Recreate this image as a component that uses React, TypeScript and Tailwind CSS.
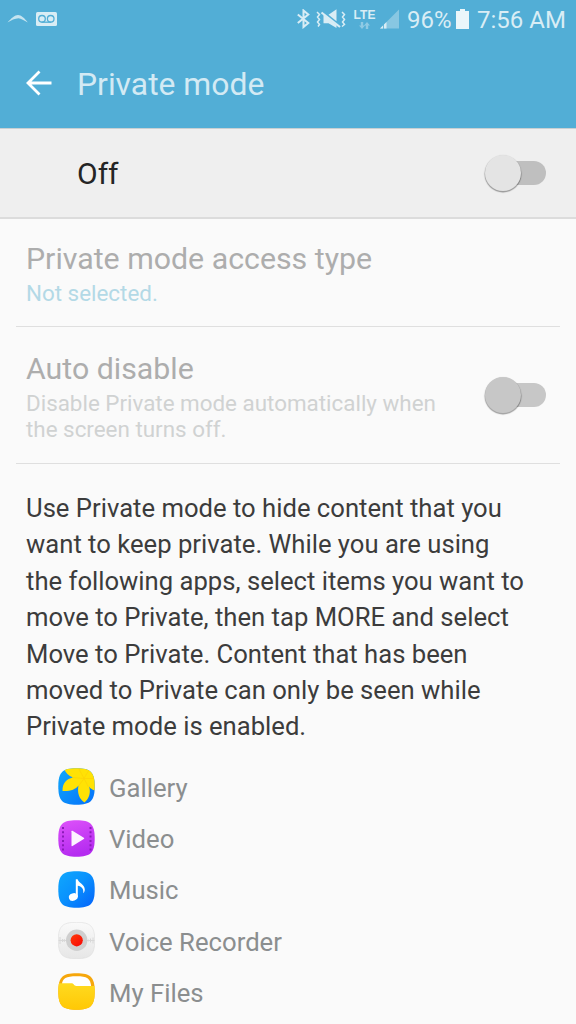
import React, { useState } from 'react';

type AppEntry = {
  name: string;
  icon: React.ReactNode;
};

// shared rounded square used by every launcher icon
const SQUIRCLE = 'M18.5 .3C32.7 .3 36.7 4.300 36.7 18.5S32.7 36.7 18.5 36.7S.3 32.7 .3 18.5S4.300 .3 18.5 .3Z';

const GalleryIcon = () => (
  <svg className="h-[37px] w-[37px]" viewBox="0 0 37 37">
    <defs>
      <linearGradient id="galleryBg" x1="0" y1="0" x2="1" y2="1">
        <stop offset="0" stopColor="#12a9fa" />
        <stop offset="1" stopColor="#0470fa" />
      </linearGradient>
      <clipPath id="galleryClip">
        <path d={SQUIRCLE} />
      </clipPath>
    </defs>
    <path d={SQUIRCLE} fill="url(#galleryBg)" />
    <g clipPath="url(#galleryClip)">
      <path
        d="M6 0C7.500 5 10.500 8 15 9.500C8.500 11 4.500 14.500 4.500 23C12 23.500 17.500 21.500 20.500 17.500C19 24.500 21 31 26.500 34.500C31.500 30 33 24 31 18.500C32.500 20.500 34.500 22 37 22.500V0Z"
        fill="#ffe205"
      />
      <path d="M26 10.500L14.500 9.500M26 10.500L20.500 18M26 10.500L30.500 19M26 10.500L21 1M26 10.500L31 2M26 10.500H37" stroke="#fdd306" strokeWidth="0.8" />
    </g>
  </svg>
);

const VideoIcon = () => (
  <svg className="h-[37px] w-[37px]" viewBox="0 0 37 37">
    <defs>
      <linearGradient id="videoBg" x1="0" y1="0" x2="0.3" y2="1">
        <stop offset="0" stopColor="#de52fa" />
        <stop offset="1" stopColor="#b52cf0" />
      </linearGradient>
    </defs>
    <path d={SQUIRCLE} fill="url(#videoBg)" />
    <path d="M5 7V31M32.500 7V31" stroke="#8a1bb8" strokeWidth="2" strokeDasharray="2 2.300" />
    <path d="M13.500 11.300Q13.500 10.300 14.500 10.800L25.800 17.700Q26.800 18.400 25.800 19.100L14.500 26Q13.500 26.500 13.500 25.500Z" fill="#fdf3ff" />
  </svg>
);

const MusicIcon = () => (
  <svg className="h-[37px] w-[37px]" viewBox="0 0 37 37">
    <defs>
      <linearGradient id="musicBg" x1="0" y1="0" x2="1" y2="1">
        <stop offset="0" stopColor="#10a8fd" />
        <stop offset="0.45" stopColor="#0a93fd" />
        <stop offset="1" stopColor="#0462fa" />
      </linearGradient>
    </defs>
    <path d={SQUIRCLE} fill="url(#musicBg)" />
    <ellipse cx="15.300" cy="26" rx="4.500" ry="3.700" transform="rotate(-18 15.300 26)" fill="#fff" />
    <path d="M17.800 8.200H19.600C20.500 12 26.800 13 26.800 18.500C26.800 20 26.300 21.200 25.300 22.200C25.800 17.500 23.500 15.500 19.800 14.800V26H17.800Z" fill="#fff" />
  </svg>
);

const RecorderIcon = () => (
  <svg className="h-[37px] w-[37px]" viewBox="0 0 37 37">
    <defs>
      <linearGradient id="recorderBg" x1="0" y1="0" x2="0" y2="1">
        <stop offset="0" stopColor="#fafafa" />
        <stop offset="1" stopColor="#e6e6e6" />
      </linearGradient>
      <linearGradient id="recorderDot" x1="0" y1="0" x2="1" y2="1">
        <stop offset="0" stopColor="#ff3a08" />
        <stop offset="1" stopColor="#f80606" />
      </linearGradient>
    </defs>
    <path d={SQUIRCLE} fill="url(#recorderBg)" stroke="#dedede" strokeWidth="0.6" />
    <path d="M.5 18.500H36.500M2 15V22M4.500 17V20M6.300 17V20M30.500 17.500V19.500M32.500 16.500V20.500M35 15.500V21.500" stroke="#d8d8d8" strokeWidth="1" />
    <circle cx="18.700" cy="18.300" r="10.700" fill="#cfcfcf" />
    <circle cx="18.700" cy="18.300" r="6.100" fill="url(#recorderDot)" />
  </svg>
);

const FilesIcon = () => (
  <svg className="h-[37px] w-[37px]" viewBox="0 0 37 37">
    <defs>
      <linearGradient id="filesBg" x1="0" y1="0" x2="0" y2="1">
        <stop offset="0" stopColor="#ffda20" />
        <stop offset="1" stopColor="#ffc805" />
      </linearGradient>
      <clipPath id="filesClip">
        <path d={SQUIRCLE} />
      </clipPath>
    </defs>
    <g clipPath="url(#filesClip)">
      <path d="M0 0H37V37H0Z" fill="#f6a70c" />
      <path d="M3.800 12C4.300 5 8 3.200 18.500 3.200S32.500 5 33.200 14H3.800Z" fill="#fff" />
      <path d="M0 10.300H13.500C16 10.300 15.500 13 18.500 13H37V37H0Z" fill="url(#filesBg)" />
    </g>
  </svg>
);

const apps: AppEntry[] = [
  { name: 'Gallery', icon: <GalleryIcon /> },
  { name: 'Video', icon: <VideoIcon /> },
  { name: 'Music', icon: <MusicIcon /> },
  { name: 'Voice Recorder', icon: <RecorderIcon /> },
  { name: 'My Files', icon: <FilesIcon /> },
];

const StatusBar = () => (
  <div className="flex h-10 items-center justify-between pl-[7px] pr-[10px] text-[#d9edf5]">
    <div className="mt-[-2px] flex items-center gap-2">
      <svg className="h-[10px] w-[21px]" viewBox="0 0 21 10">
        <path d="M.5 8.500C4 4.500 8 1 11 1C14 1 18 4.500 20.800 8.500C17 6.500 14 4.500 11.500 4.300C8 4.300 4 6.500 .5 8.500Z" fill="currentColor" opacity="0.85" />
      </svg>
      <svg className="h-[14px] w-[21px]" viewBox="0 0 21 14">
        <rect width="21" height="14" rx="1.500" fill="currentColor" />
        <g fill="none" stroke="#52aed6" strokeWidth="1.300">
          <circle cx="6" cy="6.800" r="3.300" />
          <circle cx="14.700" cy="6.800" r="3.300" />
          <path d="M5.500 10.200H15.200" />
        </g>
      </svg>
    </div>
    <div className="flex items-center">
      <svg className="mt-[-2px] h-[20px] w-[13px]" viewBox="0 0 13 20" fill="none" stroke="currentColor" strokeWidth="2">
        <path d="M.8 5.500L11.300 14L6.500 18V1.500L11.300 5.500L.8 14" />
      </svg>
      <svg className="ml-[6px] mt-[-2px] h-[20px] w-[30px]" viewBox="0 0 30 20">
        <path d="M12.500 5.800L20.500 .3V12.300Z" fill="currentColor" />
        <path d="M7.500 5.500L20.500 16V19L12.500 14.300H7.500Z" fill="currentColor" />
        <path d="M5.500 3.500L24 18" stroke="currentColor" strokeWidth="2.200" />
        <path
          d="M1 3L3.500 5.500L1.500 8L3.500 10.500L1.500 13L3.500 15.500L2 17.500M26 3L28.500 5.500L26.500 8L28.500 10.500L26.500 13L28.500 15.500L26 17.500"
          fill="none"
          stroke="currentColor"
          strokeWidth="1.500"
        />
      </svg>
      <div className="ml-[8px] mt-[-2px] flex w-[21px] flex-col items-center">
        <span className="font-['Liberation_Sans',sans-serif] text-[12px] font-bold leading-[12px]">LTE</span>
        <svg className="mt-[1px] h-[7px] w-[11px]" viewBox="0 0 11 7" fill="currentColor" opacity="0.45">
          <path d="M1.800 0H4.200V3.500H6L3 7L0 3.500H1.800ZM6.800 7H9.200V3.500H11L8 0L5 3.500H6.800Z" />
        </svg>
      </div>
      <svg className="ml-[5px] mt-[-2px] h-[20px] w-[19px]" viewBox="0 0 19 20">
        <path d="M0 19.500L19 .5V19.500Z" fill="currentColor" opacity="0.4" />
        <path d="M0 19.500L6.500 13V19.500Z" fill="currentColor" />
        <path d="M3.500 14V20" stroke="#52aed6" strokeWidth="0.800" />
      </svg>
      <span className="ml-[8px] w-[44px] whitespace-nowrap text-[24px] leading-10">96%</span>
      <svg className="ml-[5px] mt-[-2px] h-[20px] w-[13px]" viewBox="0 0 13 20" fill="#eaf6fa">
        <path d="M4 0H9V2H13V20H0V2H4Z" />
      </svg>
      <span className="ml-[8px] w-[89px] whitespace-nowrap text-[24px] leading-10">7:56 AM</span>
    </div>
  </div>
);

type SwitchProps = {
  checked: boolean;
  disabled?: boolean;
  onToggle?: () => void;
};

const Switch: React.FC<SwitchProps> = ({ checked, disabled, onToggle }) => (
  <button
    type="button"
    role="switch"
    aria-checked={checked}
    disabled={disabled}
    onClick={onToggle}
    className="relative h-[38px] w-[62px] shrink-0"
  >
    <span className={`absolute left-[14px] top-[7px] h-[24px] w-[48px] rounded-full ${disabled ? 'bg-[#c7c7c7]' : checked ? 'bg-[#9fd2e8]' : 'bg-[#bfbfbf]'}`} />
    <span
      className={`absolute top-[1px] h-[36px] w-[36px] rounded-full shadow-[0_1px_1px_0.5px_rgba(0,0,0,0.36)] ${checked ? 'left-[25px]' : 'left-[1px]'} ${disabled ? 'bg-[#c7c7c7]' : 'bg-[#e4e4e4]'}`}
    />
  </button>
);

export default function App() {
  const [enabled, setEnabled] = useState(false);

  return (
    <div className="h-[1024px] w-[576px] overflow-hidden bg-[#fafafa] font-[Roboto,sans-serif]">
      <header className="h-[128px] bg-[#52aed6]">
        <StatusBar />
        <div className="flex h-[88px] items-center pl-[26px]">
          <svg className="mt-[-2px] h-[26px] w-[26px]" viewBox="0 0 26 26" fill="none" stroke="#fff" strokeWidth="2.800">
            <path d="M13.500 1.500L2 13L13.500 24.500M2 13H25.500" />
          </svg>
          <h1 className="ml-[25px] text-[31.850px] leading-[88px] text-[#d3eaf4]">Private mode</h1>
        </div>
      </header>

      <section className="flex h-[91px] items-center justify-between border-b-2 border-t border-b-[#dcdcdc] border-t-[#c8d0d3] bg-[#efefef] pl-[77px] pr-[30px]">
        <span className="text-[30px] text-[#252525]">{enabled ? 'On' : 'Off'}</span>
        <Switch checked={enabled} onToggle={() => setEnabled(!enabled)} />
      </section>

      <section className="mx-4 h-[108px] border-b border-[#dfdfdf] px-[10px] pt-[21px]">
        <div className="text-[30.300px] leading-[38px] text-[#adadad]">Private mode access type</div>
        <div className="text-[22.400px] leading-[31px] text-[#b3d9e6]">Not selected.</div>
      </section>

      <section className="mx-4 flex h-[137px] items-center justify-between border-b border-[#dfdfdf] pl-[10px] pr-[14px]">
        <div>
          <div className="text-[30.300px] leading-[42px] text-[#adadad]">Auto disable</div>
          <p className="text-[22.400px] leading-[26.500px] text-[#d0d2d2]">
            Disable Private mode automatically when
            <br />
            the screen turns off.
          </p>
        </div>
        <Switch checked={false} disabled />
      </section>

      <p className="whitespace-nowrap pl-[26px] pt-[26px] text-[25.650px] leading-[36.400px] text-[#3c3c3c]">
        Use Private mode to hide content that you
        <br />
        want to keep private. While you are using
        <br />
        the following apps, select items you want to
        <br />
        move to Private, then tap MORE and select
        <br />
        Move to Private. Content that has been
        <br />
        moved to Private can only be seen while
        <br />
        Private mode is enabled.
      </p>

      <ul className="pl-[58px] pt-[16.500px]">
        {apps.map((app) => (
          <li key={app.name} className="flex h-[51.200px] items-center gap-[14px]">
            {app.icon}
            <span className="pt-[2px] text-[25.700px] leading-[36px] text-[#8b8e8f]">{app.name}</span>
          </li>
        ))}
      </ul>
    </div>
  );
}
